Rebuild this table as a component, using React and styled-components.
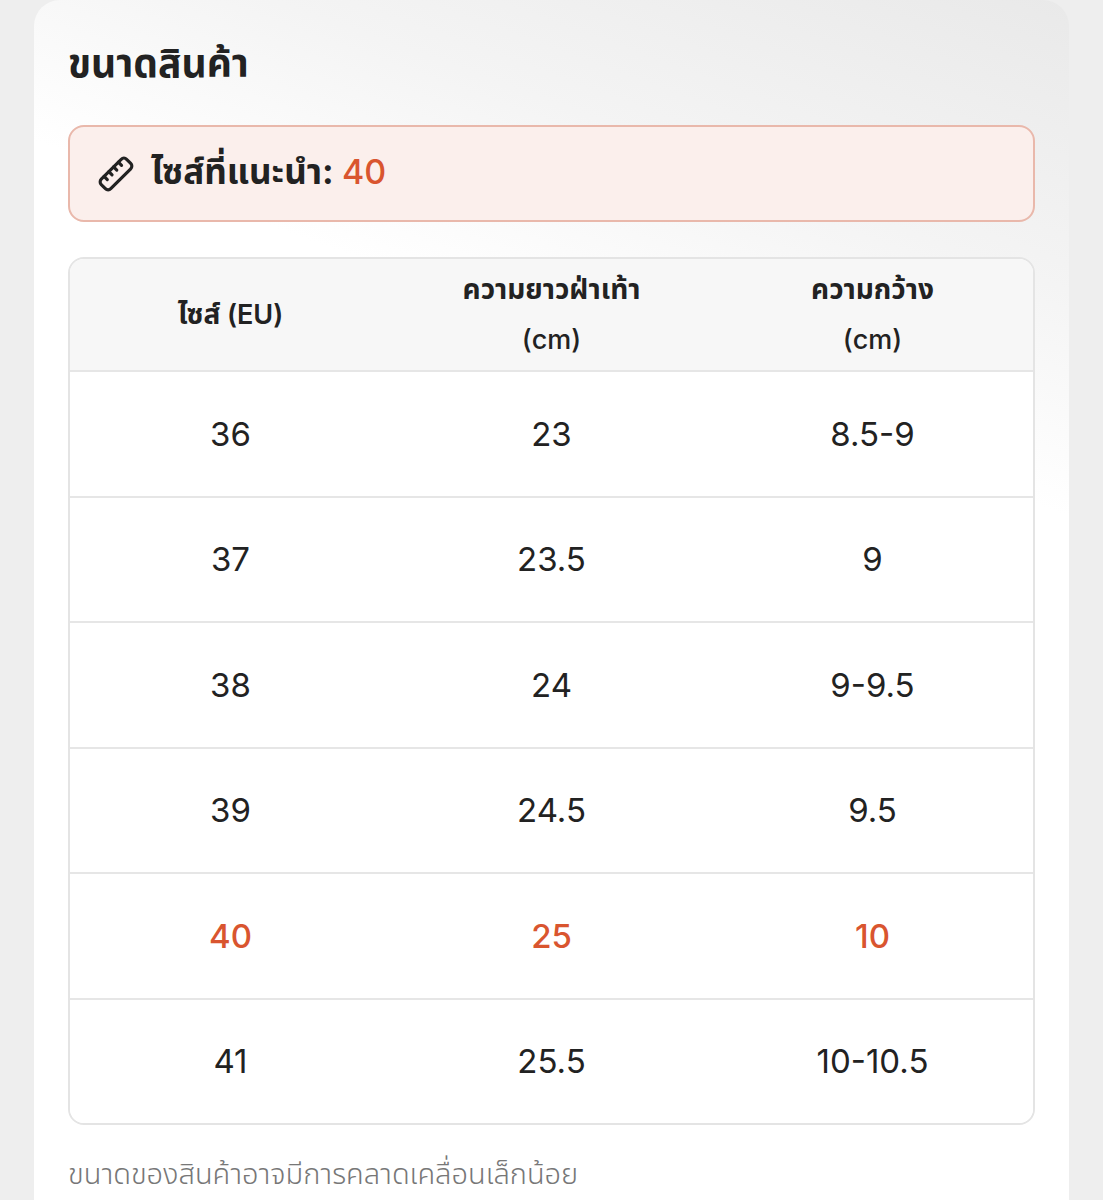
import React from 'react';
import styled, { createGlobalStyle } from 'styled-components';
import { Ruler } from 'lucide-react';

const GlobalStyle = createGlobalStyle`
  html, body {
    margin: 0;
    padding: 0;
    background: #eeeeee;
  }
  body {
    font-family: Inter, "Noto Sans Thai", "Noto Sans", sans-serif;
    color: #222;
  }
`;

const Page = styled.div`
  width: 1103px;
  min-height: 1200px;
  padding: 0 34px 0 34px;
  box-sizing: border-box;
  overflow: hidden;
`;

const Card = styled.section`
  background: linear-gradient(200deg, #e9e9e9 0%, #f4f4f4 18%, #ffffff 32%, #ffffff 100%);
  border-radius: 26px;
  padding: 36px 34px 40px 34px;
  min-height: 1240px;
  box-sizing: border-box;
`;

const Title = styled.h2`
  margin: 0;
  font-size: 39px;
  font-weight: 700;
  color: #222;
  line-height: 54px;
`;

const Recommend = styled.div`
  margin-top: 35px;
  height: 97px;
  box-sizing: border-box;
  border: 2px solid #e9b8ab;
  border-radius: 16px;
  background: #fbefec;
  display: flex;
  align-items: center;
  gap: 16px;
  padding-left: 27px;
  font-size: 35px;
  font-weight: 700;
  color: #222;
`;

const Accent = styled.span`
  color: #d9552f;
  font-weight: 500;
  font-size: 34px;
`;

const Table = styled.div`
  margin-top: 35px;
  border: 2px solid #e4e4e4;
  border-radius: 16px;
  overflow: hidden;
  background: #fff;
`;

const Row = styled.div`
  display: grid;
  grid-template-columns: 1fr 1fr 1fr;
  align-items: center;
  height: ${(p) => (p.$head ? '111px' : '125.5px')};
  background: ${(p) => (p.$head ? '#f7f7f7' : '#fff')};
  border-top: ${(p) => (p.$first ? 'none' : '2px solid #e6e6e6')};
  box-sizing: border-box;
`;

const HeadCell = styled.div`
  text-align: center;
  font-size: 28px;
  font-weight: 700;
  line-height: 50px;
  color: #222;
`;

const Sub = styled.span`
  font-size: 27px;
  font-weight: ${(p) => (p.$strong ? 600 : 500)};
`;

const Cell = styled.div`
  text-align: center;
  font-size: 33px;
  font-weight: ${(p) => (p.$hl ? 500 : 400)};
  color: ${(p) => (p.$hl ? '#d9552f' : '#222')};
`;

const Note = styled.p`
  margin: 28px 0 0 0;
  font-size: 29px;
  font-weight: 300;
  color: #777;
`;

const rows = [
  ['36', '23', '8.5-9'],
  ['37', '23.5', '9'],
  ['38', '24', '9-9.5'],
  ['39', '24.5', '9.5'],
  ['40', '25', '10'],
  ['41', '25.5', '10-10.5'],
];

export default function App() {
  return (
    <Page>
      <GlobalStyle />
      <Card>
        <Title>ขนาดสินค้า</Title>
        <Recommend>
          <Ruler size={38} strokeWidth={2} style={{ transform: 'scaleX(-1)' }} />
          <span>
            ไซส์ที่แนะนำ: <Accent>40</Accent>
          </span>
        </Recommend>
        <Table>
          <Row $head $first>
            <HeadCell>ไซส์ <Sub $strong>(EU)</Sub></HeadCell>
            <HeadCell>
              ความยาวฝ่าเท้า<br />
              <Sub>(cm)</Sub>
            </HeadCell>
            <HeadCell>
              ความกว้าง<br />
              <Sub>(cm)</Sub>
            </HeadCell>
          </Row>
          {rows.map((r) => (
            <Row key={r[0]}>
              {r.map((v, i) => (
                <Cell key={i} $hl={r[0] === '40'}>{v}</Cell>
              ))}
            </Row>
          ))}
        </Table>
        <Note>ขนาดของสินค้าอาจมีการคลาดเคลื่อนเล็กน้อย</Note>
      </Card>
    </Page>
  );
}
